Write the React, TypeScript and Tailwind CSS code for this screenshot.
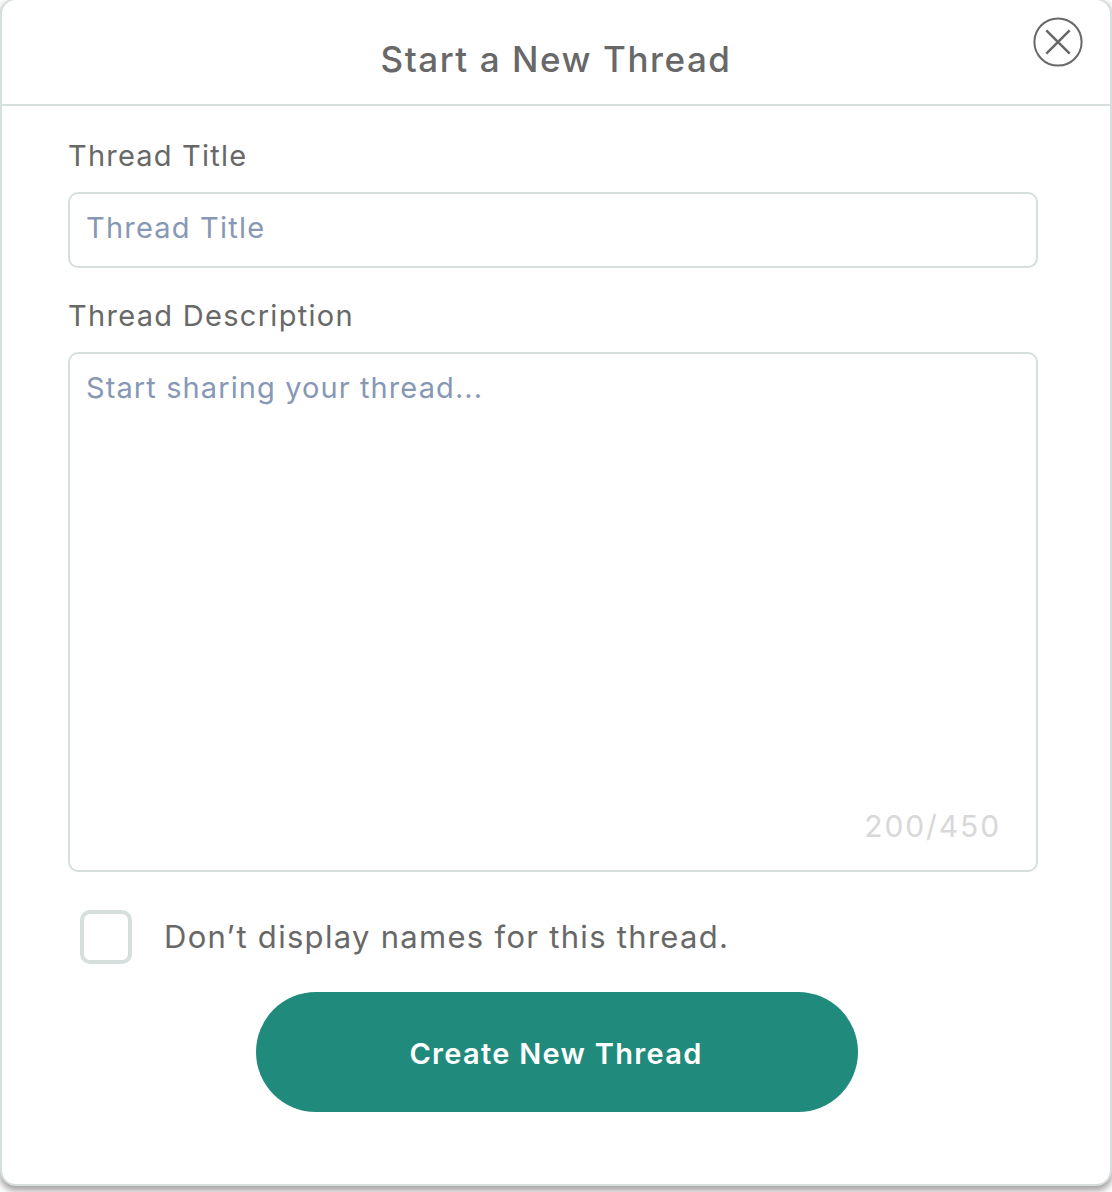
export default function App() {
  return (
    <div className="h-[1192px] w-[1112px] overflow-hidden bg-white font-['Inter',sans-serif] text-[#686868]">
      <section className="-mt-0.5 flex h-[1188px] w-full flex-col rounded-2xl border-2 border-[#d6dfdd] bg-white shadow-[0_4px_6px_1px_rgba(40,30,30,0.4)]">
        <header className="relative flex h-[106px] shrink-0 items-center justify-center border-b-2 border-[#d6dfdd] pt-3.5">
          <h1 className="whitespace-nowrap text-[35px] leading-10 font-medium tracking-[1.55px]">Start a New Thread</h1>
          <button type="button" aria-label="Close" className="absolute top-[17px] right-[27px] size-[50px]">
            <svg viewBox="0 0 50 50" className="size-full" fill="none" stroke="#686868">
              <circle cx="25" cy="25" r="23.6" strokeWidth="2" />
              <path d="M13.3 13.3 36.7 36.7M36.7 13.3 13.3 36.7" strokeWidth="2.6" />
            </svg>
          </button>
        </header>
        <form className="flex flex-col px-[66px] pt-[30px] text-[29px] leading-10">
          <label htmlFor="title" className="self-start whitespace-nowrap tracking-[1.2px]">Thread Title</label>
          <input
            id="title"
            placeholder="Thread Title"
            className="mt-4 h-[76px] w-[970px] rounded-[10px] border-2 border-[#d6dfdd] px-4 pb-1.5 tracking-[1.2px] outline-none placeholder:text-[#8798b4]"
          />
          <label htmlFor="description" className="mt-7 self-start whitespace-nowrap tracking-[1.3px]">Thread Description</label>
          <div className="mt-4 flex h-[520px] w-[970px] flex-col rounded-[10px] border-2 border-[#d6dfdd] px-4 pt-[14px] pb-6">
            <textarea
              id="description"
              placeholder="Start sharing your thread..."
              className="w-full flex-1 resize-none tracking-[1.1px] outline-none placeholder:text-[#8798b4]"
            />
            <span className="mr-[19px] self-end text-[30px] tracking-[1.9px] text-[#d8d8d8]">200/450</span>
          </div>
          <label className="mt-[38px] ml-3 flex h-[54px] items-center gap-8">
            <input type="checkbox" className="h-[54px] w-[52px] appearance-none rounded-[10px] border-4 border-[#d6dfdd] bg-white" />
            <span className="whitespace-nowrap text-[31px] tracking-[1.3px]">Don’t display names for this thread.</span>
          </label>
          <button
            type="button"
            className="mt-7 ml-[188px] flex h-[120px] w-[602px] items-center justify-center rounded-full bg-[#208b7c] pt-1 pr-0.5 font-semibold tracking-[1.3px] whitespace-nowrap text-white"
          >
            Create New Thread
          </button>
        </form>
      </section>
    </div>
  );
}
